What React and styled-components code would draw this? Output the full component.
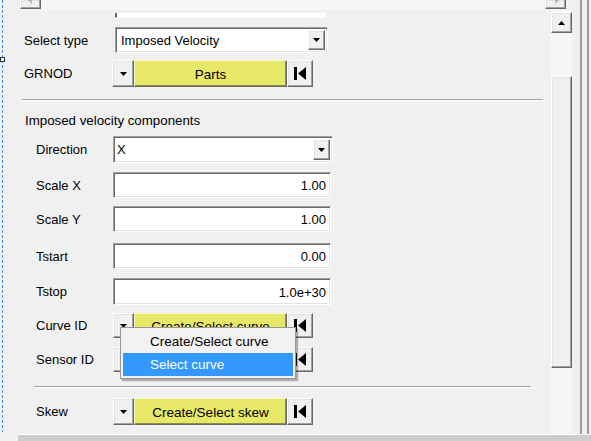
import React from 'react';
import styled, { createGlobalStyle } from 'styled-components';

const GlobalStyle = createGlobalStyle`
	html,
	body {
		margin: 0;
		padding: 0;
		background: #f0f0f0;
	}
	body {
		font-family: 'Liberation Sans', Arial, sans-serif;
		font-size: 13px;
		color: #000;
	}
	* {
		box-sizing: border-box;
	}
`;

// classic windows bevels
const raised = `
	border: 1px solid;
	border-color: #ffffff #696969 #696969 #ffffff;
	box-shadow: inset -1px -1px 0 #a0a0a0, inset 1px 1px 0 #e3e3e3;
`;

const sunken = `
	border: 1px solid;
	border-color: #a0a0a0 #ffffff #ffffff #a0a0a0;
	box-shadow: inset 1px 1px 0 #696969, inset -1px -1px 0 #e3e3e3;
`;

const hatch = `repeating-conic-gradient(#f0f0f0 0 25%, #fdfdfd 0 50%) 0 0 / 2px 2px`;

const Window = styled.div`
	width: 591px;
	height: 441px;
	overflow: hidden;
	display: grid;
	grid-template-columns: 20px 531px 21px 19px;
	grid-template-rows: 10px 424px 7px;
	background: #f0f0f0;
`;

const Gutter = styled.div`
	grid-column: 1;
	grid-row: 1 / 3;
	position: relative;
	padding: 0 0 2px 2px;
`;

const DashLine = styled.div`
	width: 1px;
	height: 100%;
	background: repeating-linear-gradient(to bottom, #3b8ded 0 3px, transparent 3px 5px);
`;

const Handle = styled.div`
	position: absolute;
	left: 0;
	top: 57px;
	width: 5px;
	height: 5px;
	background: #fff;
	border: 1px solid #333;
`;

const TopStrip = styled.div`
	grid-column: 2 / 4;
	grid-row: 1;
	margin-right: 6px;
	display: flex;
`;

const HScrollBtn = styled.div`
	width: 21px;
	height: 9px;
	background: #f0f0f0;
	${raised};
	border-top: none;
	display: flex;
	justify-content: center;
	svg {
		display: block;
	}
`;

const HTrack = styled.div`
	flex: 1;
	background: ${hatch};
`;

const Content = styled.div`
	grid-column: 2;
	grid-row: 2;
	display: flex;
	flex-direction: column;
	overflow: hidden;
	position: relative;
`;

const ClippedField = styled.div`
	margin: 3px 0 0 95px;
	width: 211px;
	height: 5px;
	background: #fff;
	border-left: 2px solid #6a6a6a;
	border-bottom: 1px solid #fafafa;
`;

const Row = styled.div`
	display: grid;
	grid-template-columns: ${(p) => p.$labelW}px auto;
	align-items: center;
	justify-content: start;
	height: ${(p) => p.$h}px;
	margin-top: ${(p) => p.$mt}px;
	padding-left: ${(p) => p.$indent}px;
`;

const Label = styled.span`
	white-space: nowrap;
	line-height: 16px;
	padding-top: 1px;
`;

const Combo = styled.div`
	width: ${(p) => p.$w}px;
	height: 100%;
	background: #fff;
	${sunken};
	padding: 2px;
	display: flex;
	align-items: stretch;
`;

const ComboText = styled.span`
	flex: 1;
	display: flex;
	align-items: center;
	padding-left: ${(p) => p.$pad}px;
	white-space: nowrap;
`;

const DropBtn = styled.div`
	width: 17px;
	background: #f0f0f0;
	${raised};
	display: flex;
	align-items: center;
	justify-content: center;
`;

const Field = styled.div`
	width: 218px;
	height: 100%;
	background: #fff;
	${sunken};
	display: flex;
	align-items: center;
	justify-content: flex-end;
	padding: 1px 4px 0 0;
	white-space: nowrap;
`;

const PickGroup = styled.div`
	position: relative;
	display: flex;
	height: 100%;
`;

const ArrowBtn = styled.div`
	width: ${(p) => p.$w || 21}px;
	height: 100%;
	background: #f0f0f0;
	${raised};
	display: flex;
	align-items: center;
	justify-content: center;
`;

const YellowBtn = styled.div`
	width: 153px;
	height: 100%;
	background: #e8e868;
	${raised};
	border-color: #f8f8c8 #696969 #696969 #f8f8c8;
	box-shadow: inset -1px -1px 0 #8c8c4a;
	display: flex;
	align-items: center;
	justify-content: center;
	font-size: 13.5px;
	white-space: nowrap;
	padding-top: 1px;
`;

const FirstBtn = styled.div`
	width: 26px;
	height: 100%;
	background: #f0f0f0;
	${raised};
	display: flex;
	align-items: center;
	justify-content: center;
`;

const Separator = styled.div`
	margin: ${(p) => p.$mt}px 0 0 ${(p) => p.$left}px;
	width: ${(p) => p.$w}px;
	height: 2px;
	border-top: 1px solid #a0a0a0;
	border-bottom: 1px solid #ffffff;
	flex-shrink: 0;
`;

const GroupTitle = styled.div`
	margin-top: 12px;
	padding-left: 5px;
	line-height: 16px;
	height: 16px;
	font-size: 13.3px;
`;

const Menu = styled.div`
	position: absolute;
	top: 14px;
	left: 7px;
	width: 176px;
	padding: 2px;
	background: #f2f2f2;
	border: 1px solid #979797;
	box-shadow: 2px 2px 1px rgba(0, 0, 0, 0.28);
	z-index: 2;
`;

const MenuItem = styled.div`
	height: 23px;
	line-height: 23px;
	padding-left: 27px;
	font-size: 13.5px;
	white-space: nowrap;
	background: ${(p) => (p.$active ? '#3399ff' : 'transparent')};
	color: ${(p) => (p.$active ? '#fff' : '#000')};
`;

const VScroll = styled.div`
	grid-column: 3;
	grid-row: 2;
	display: flex;
	flex-direction: column;
	background: ${hatch};
`;

const UpBtn = styled.div`
	margin-top: 2px;
	height: 21px;
	background: #f0f0f0;
	${raised};
	display: flex;
	align-items: center;
	justify-content: center;
`;

const Thumb = styled.div`
	margin-top: 43px;
	height: 292px;
	background: #f0f0f0;
	${raised};
`;

const FrameEdge = styled.div`
	grid-column: 4;
	grid-row: 1 / 3;
	padding-left: 8px;
`;

const EdgeLines = styled.div`
	width: 9px;
	height: 100%;
	border-left: 2px solid #9c9c9c;
	border-right: 2px solid #9c9c9c;
	background: #f0f0f0;
`;

const BottomBar = styled.div`
	grid-column: 1 / -1;
	grid-row: 3;
	padding-left: 18px;
`;

const GrayBar = styled.div`
	height: 100%;
	border-top: 1px solid #fff;
	background: #cdcdcd;
`;

const Down = () => (
	<svg width="7" height="4" viewBox="0 0 7 4">
		<polygon points="0,0 7,0 3.5,4" fill="#000" />
	</svg>
);

const Up = () => (
	<svg width="7" height="4" viewBox="0 0 7 4">
		<polygon points="0,4 7,4 3.5,0" fill="#000" />
	</svg>
);

const First = () => (
	<svg width="12" height="13" viewBox="0 0 12 13">
		<rect x="0" y="0" width="3" height="13" fill="#000" />
		<polygon points="12,0 4,6.5 12,13" fill="#000" />
	</svg>
);

const Picker = ({ label, text, mt, h, w, children }) => (
	<Row $labelW={77} $indent={16} $mt={mt} $h={h}>
		<Label>{label}</Label>
		<PickGroup>
			<ArrowBtn $w={w}>
				<Down />
			</ArrowBtn>
			<YellowBtn>{text}</YellowBtn>
			<FirstBtn>
				<First />
			</FirstBtn>
			{children}
		</PickGroup>
	</Row>
);

const fields = [
	{ label: 'Scale X', value: '1.00', mt: 9, h: 26 },
	{ label: 'Scale Y', value: '1.00', mt: 8, h: 26 },
	{ label: 'Tstart', value: '0.00', mt: 11, h: 26 },
	{ label: 'Tstop', value: '1.0e+30', mt: 9, h: 27 },
];

const App = () => {
	return (
		<>
			<GlobalStyle />
			<Window>
				<Gutter>
					<DashLine />
					<Handle />
				</Gutter>

				<TopStrip>
					<HScrollBtn>
						<svg width="21" height="8" viewBox="0 0 21 8">
							<polygon points="12,-4 8,0 12,4" fill="#b4b4b4" />
						</svg>
					</HScrollBtn>
					<HTrack />
					<HScrollBtn>
						<svg width="21" height="8" viewBox="0 0 21 8">
							<polygon points="10,-4 14,0 10,4" fill="#b4b4b4" />
						</svg>
					</HScrollBtn>
				</TopStrip>

				<Content>
					<ClippedField />
					<Row $labelW={91} $indent={4} $mt={9} $h={26}>
						<Label>Select type</Label>
						<Combo $w={213}>
							<ComboText $pad={3}>Imposed Velocity</ComboText>
							<DropBtn>
								<Down />
							</DropBtn>
						</Combo>
					</Row>
					<Row $labelW={88} $indent={4} $mt={7} $h={27}>
						<Label>GRNOD</Label>
						<PickGroup>
							<ArrowBtn $w={22}>
								<Down />
							</ArrowBtn>
							<YellowBtn>Parts</YellowBtn>
							<FirstBtn>
								<First />
							</FirstBtn>
						</PickGroup>
					</Row>

					<Separator $mt={12} $left={2} $w={521} />

					<GroupTitle>Imposed velocity components</GroupTitle>
					<Row $labelW={77} $indent={16} $mt={7} $h={27}>
						<Label>Direction</Label>
						<Combo $w={220}>
							<ComboText $pad={1}>X</ComboText>
							<DropBtn>
								<Down />
							</DropBtn>
						</Combo>
					</Row>
					{fields.map((f) => (
						<Row key={f.label} $labelW={77} $indent={16} $mt={f.mt} $h={f.h}>
							<Label>{f.label}</Label>
							<Field>{f.value}</Field>
						</Row>
					))}
					<Picker label="Curve ID" text="Create/Select curve" mt={8} h={25}>
						<Menu>
							<MenuItem>Create/Select curve</MenuItem>
							<MenuItem $active>Select curve</MenuItem>
						</Menu>
					</Picker>
					{/* button caption sits fully under the open menu */}
					<Picker label="Sensor ID" text="" mt={9} h={25} />

					<Separator $mt={14} $left={14} $w={497} />

					<Picker label="Skew" text="Create/Select skew" mt={10} h={27} />
				</Content>

				<VScroll>
					<UpBtn>
						<Up />
					</UpBtn>
					<Thumb />
				</VScroll>

				<FrameEdge>
					<EdgeLines />
				</FrameEdge>

				<BottomBar>
					<GrayBar />
				</BottomBar>
			</Window>
		</>
	);
};

export default App;
